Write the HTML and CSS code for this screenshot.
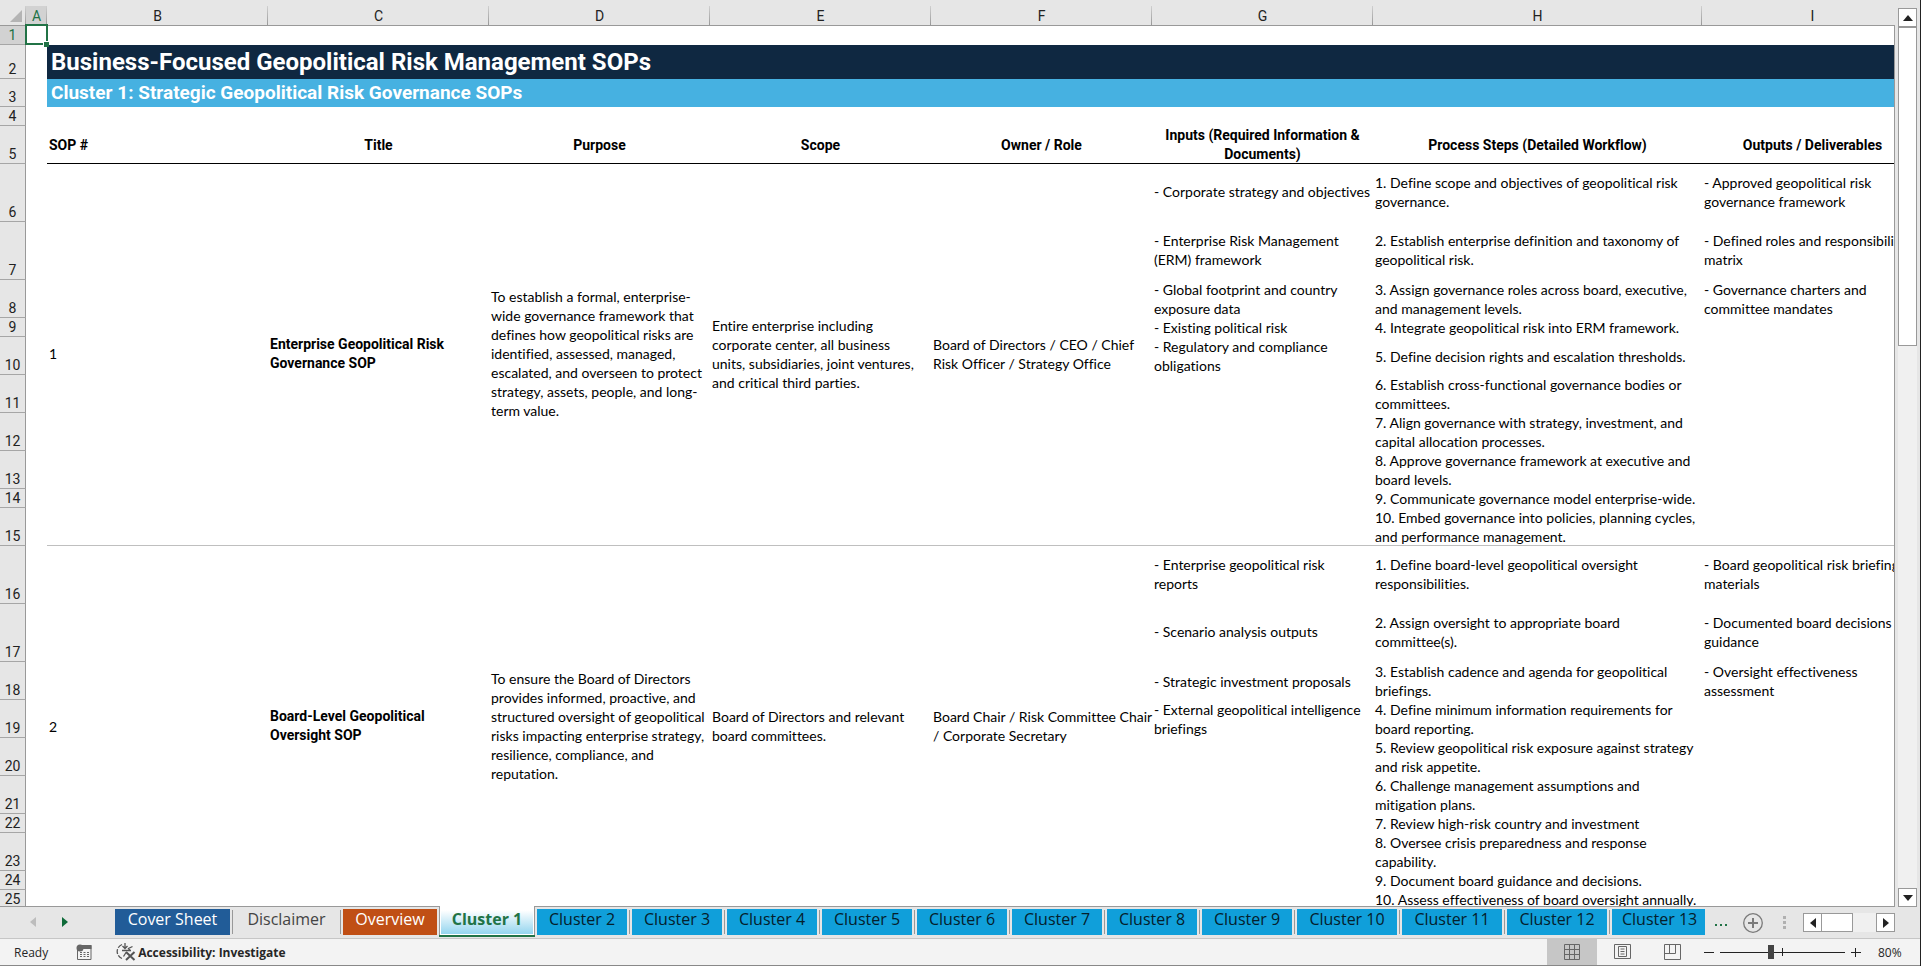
FILE: index.html
```html
<!DOCTYPE html>
<html lang="en">
<head>
<meta charset="utf-8">
<title>Business-Focused Geopolitical Risk Management SOPs</title>
<link rel="stylesheet" href="styles.css">
</head>
<body>
<main class="workspace">
  <div class="sheet">
    <table class="grid">
      <colgroup>
        <col class="w-head"><col class="w-a"><col class="w-std"><col class="w-std"><col class="w-std"><col class="w-std"><col class="w-std"><col class="w-std"><col class="w-h"><col>
      </colgroup>
      <thead>
        <tr>
          <th class="corner"><svg width="12" height="12" viewBox="0 0 12 12" aria-hidden="true"><path d="M12 0V12H0Z" fill="#b4b4b4"/></svg></th>
          <th class="on">A</th><th>B</th><th>C</th><th>D</th><th>E</th><th>F</th><th>G</th><th>H</th><th>I</th>
        </tr>
      </thead>
      <tbody>
        <tr class="r1"><th class="on">1</th><td class="selected"><span class="handle"></span></td><td colspan="8"></td></tr>
        <tr class="r-title"><th>2</th><td></td><td class="title" colspan="8">Business-Focused Geopolitical Risk Management SOPs</td></tr>
        <tr class="r-sub"><th>3</th><td></td><td class="subtitle" colspan="8">Cluster 1: Strategic Geopolitical Risk Governance SOPs</td></tr>
        <tr class="r1"><th>4</th><td></td><td colspan="8"></td></tr>
        <tr class="r2 fields"><th>5</th><td></td><td class="first">SOP #</td><td>Title</td><td>Purpose</td><td>Scope</td><td>Owner / Role</td><td>Inputs (Required Information &amp;<br>Documents)</td><td>Process Steps (Detailed Workflow)</td><td>Outputs / Deliverables</td></tr>

        <tr class="r3"><th>6</th><td rowspan="10"></td><td class="end" rowspan="10">1</td><td class="end name" rowspan="10">Enterprise Geopolitical Risk<br>Governance SOP</td><td class="end" rowspan="10">To establish a formal, enterprise-<br>wide governance framework that<br>defines how geopolitical risks are<br>identified, assessed, managed,<br>escalated, and overseen to protect<br>strategy, assets, people, and long-<br>term value.</td><td class="end" rowspan="10">Entire enterprise including<br>corporate center, all business<br>units, subsidiaries, joint ventures,<br>and critical third parties.</td><td class="end" rowspan="10">Board of Directors / CEO / Chief<br>Risk Officer / Strategy Office</td><td>- Corporate strategy and objectives</td><td>1. Define scope and objectives of geopolitical risk<br>governance.</td><td>- Approved geopolitical risk<br>governance framework</td></tr>
        <tr class="r3"><th>7</th><td>- Enterprise Risk Management<br>(ERM) framework</td><td>2. Establish enterprise definition and taxonomy of<br>geopolitical risk.</td><td>- Defined roles and responsibility<br>matrix</td></tr>
        <tr class="r2"><th>8</th><td>- Global footprint and country<br>exposure data</td><td>3. Assign governance roles across board, executive,<br>and management levels.</td><td>- Governance charters and<br>committee mandates</td></tr>
        <tr class="r1"><th>9</th><td>- Existing political risk</td><td>4. Integrate geopolitical risk into ERM framework.</td><td></td></tr>
        <tr class="r2"><th>10</th><td>- Regulatory and compliance<br>obligations</td><td>5. Define decision rights and escalation thresholds.</td><td></td></tr>
        <tr class="r2"><th>11</th><td></td><td>6. Establish cross-functional governance bodies or<br>committees.</td><td></td></tr>
        <tr class="r2"><th>12</th><td></td><td>7. Align governance with strategy, investment, and<br>capital allocation processes.</td><td></td></tr>
        <tr class="r2"><th>13</th><td></td><td>8. Approve governance framework at executive and<br>board levels.</td><td></td></tr>
        <tr class="r1"><th>14</th><td></td><td>9. Communicate governance model enterprise-wide.</td><td></td></tr>
        <tr class="r2"><th>15</th><td class="end"></td><td class="end">10. Embed governance into policies, planning cycles,<br>and performance management.</td><td class="end"></td></tr>

        <tr class="r3"><th>16</th><td rowspan="10"></td><td rowspan="10">2</td><td class="name" rowspan="10">Board-Level Geopolitical<br>Oversight SOP</td><td rowspan="10">To ensure the Board of Directors<br>provides informed, proactive, and<br>structured oversight of geopolitical<br>risks impacting enterprise strategy,<br>resilience, compliance, and<br>reputation.</td><td rowspan="10">Board of Directors and relevant<br>board committees.</td><td rowspan="10">Board Chair / Risk Committee Chair<br>/ Corporate Secretary</td><td>- Enterprise geopolitical risk<br>reports</td><td>1. Define board-level geopolitical oversight<br>responsibilities.</td><td>- Board geopolitical risk briefing<br>materials</td></tr>
        <tr class="r3"><th>17</th><td>- Scenario analysis outputs</td><td>2. Assign oversight to appropriate board<br>committee(s).</td><td>- Documented board decisions and<br>guidance</td></tr>
        <tr class="r2"><th>18</th><td>- Strategic investment proposals</td><td>3. Establish cadence and agenda for geopolitical<br>briefings.</td><td>- Oversight effectiveness<br>assessment</td></tr>
        <tr class="r2"><th>19</th><td>- External geopolitical intelligence<br>briefings</td><td>4. Define minimum information requirements for<br>board reporting.</td><td></td></tr>
        <tr class="r2"><th>20</th><td></td><td>5. Review geopolitical risk exposure against strategy<br>and risk appetite.</td><td></td></tr>
        <tr class="r2"><th>21</th><td></td><td>6. Challenge management assumptions and<br>mitigation plans.</td><td></td></tr>
        <tr class="r1"><th>22</th><td></td><td>7. Review high-risk country and investment</td><td></td></tr>
        <tr class="r2"><th>23</th><td></td><td>8. Oversee crisis preparedness and response<br>capability.</td><td></td></tr>
        <tr class="r1"><th>24</th><td></td><td>9. Document board guidance and decisions.</td><td></td></tr>
        <tr class="r1"><th>25</th><td></td><td>10. Assess effectiveness of board oversight annually.</td><td></td></tr>
      </tbody>
    </table>
  </div>
  <div class="vscroll">
    <button class="scroll-btn" aria-label="Scroll up"><svg width="10" height="6" viewBox="0 0 10 6"><path d="M5 0L10 6H0Z" fill="#222"/></svg></button>
    <div class="vtrack"><div class="vthumb"></div></div>
    <button class="scroll-btn" aria-label="Scroll down"><svg width="10" height="6" viewBox="0 0 10 6"><path d="M5 6L10 0H0Z" fill="#222"/></svg></button>
  </div>
</main>

<nav class="tabbar" aria-label="Sheets">
  <div class="tabnav">
    <button aria-label="Previous sheets"><svg width="6" height="10" viewBox="0 0 6 10"><path d="M6 0V10L0 5Z" fill="#bdbdbd"/></svg></button>
    <button aria-label="Next sheets"><svg width="6" height="10" viewBox="0 0 6 10"><path d="M0 0V10L6 5Z" fill="#0f6b3a"/></svg></button>
  </div>
  <div class="tabs" role="tablist">
    <button role="tab" class="tab cover">Cover Sheet</button>
    <button role="tab" class="tab plain">Disclaimer</button>
    <button role="tab" class="tab overview">Overview</button>
    <button role="tab" class="tab active" aria-selected="true">Cluster 1</button>
    <button role="tab" class="tab">Cluster 2</button>
    <button role="tab" class="tab">Cluster 3</button>
    <button role="tab" class="tab">Cluster 4</button>
    <button role="tab" class="tab">Cluster 5</button>
    <button role="tab" class="tab">Cluster 6</button>
    <button role="tab" class="tab">Cluster 7</button>
    <button role="tab" class="tab">Cluster 8</button>
    <button role="tab" class="tab">Cluster 9</button>
    <button role="tab" class="tab wide">Cluster 10</button>
    <button role="tab" class="tab wide">Cluster 11</button>
    <button role="tab" class="tab wide">Cluster 12</button>
    <button role="tab" class="tab last">Cluster 13</button>
  </div>
  <div class="tabtools">
    <button class="more" aria-label="More sheets"><svg width="12" height="2" viewBox="0 0 12 2"><path d="M0 0h2v2H0zM5 0h2v2H5zM10 0h2v2h-2z" fill="#217346"/></svg></button>
    <button class="add" aria-label="New sheet"><svg width="20" height="20" viewBox="0 0 20 20" fill="none" stroke="#7a7a7a"><circle cx="10" cy="10" r="9.3" stroke-width="1.3"/><path d="M10 5v10M5 10h10" stroke-width="2"/></svg></button>
    <svg class="grip" width="3" height="13" viewBox="0 0 3 13"><path d="M0 0h3v3H0zM0 5h3v3H0zM0 10h3v3H0z" fill="#b0b0b0"/></svg>
    <div class="hscroll">
      <button class="scroll-btn" aria-label="Scroll left"><svg width="6" height="10" viewBox="0 0 6 10"><path d="M6 0V10L0 5Z" fill="#222"/></svg></button>
      <div class="htrack"><div class="hthumb"></div></div>
      <button class="scroll-btn" aria-label="Scroll right"><svg width="6" height="10" viewBox="0 0 6 10"><path d="M0 0V10L6 5Z" fill="#222"/></svg></button>
    </div>
  </div>
</nav>

<footer class="status">
  <span class="ready">Ready</span>
  <button class="macro" aria-label="Record macro"><svg width="16" height="16" viewBox="0 0 16 16"><path d="M1.500 6V15.500H15V1.500H6" fill="none" stroke="#666"/><path d="M7 1h8.500v4H6z" fill="#666"/><circle cx="4" cy="4" r="3.500" fill="#666"/><path d="M4 8.500h9M4 10.500h9M4 12.500h9" stroke="#666" stroke-dasharray="2 1.500"/></svg></button>
  <button class="access"><svg width="20" height="18" viewBox="0 0 20 18" fill="none" stroke="#555" stroke-width="1.300"><path d="M6 1.500A7.500 7.500 0 0 0 6 15.500" stroke-dasharray="5 1.500"/><path d="M9 0V5M6.500 3L9 5.500L11.500 3M16.500 3.500L12.500 5.500L14.500 8M10 9.500L7.500 13.500M6 7.500h9"/><path d="M10 9L18.500 17M18.500 9L10 17" stroke-width="2"/></svg>Accessibility: Investigate</button>
  <div class="views">
    <button class="view current" aria-label="Normal"><svg width="16" height="16" viewBox="0 0 16 16" fill="none" stroke="#666"><path d="M.5 .5h15v15H.5zM5.500 .5v15M10.500 .5v15M.5 5.500h15M.5 10.500h15"/></svg></button>
    <button class="view" aria-label="Page Layout"><svg width="17" height="16" viewBox="0 0 17 16" fill="none" stroke="#666"><path d="M.5 .5h16v14H.5zM4.500 2.500h8v10h-8zM6.500 5h4M6.500 7.500h4M6.500 10h4"/></svg></button>
    <button class="view" aria-label="Page Break Preview"><svg width="17" height="16" viewBox="0 0 17 16" fill="none" stroke="#666"><path d="M.5 .5h16v15H.5zM.5 9.500h11V.5M5.500 .5v9"/></svg></button>
  </div>
  <div class="zoom">
    <button aria-label="Zoom out"><svg width="10" height="10" viewBox="0 0 10 10"><path d="M0 5.500h10" stroke="#222"/></svg></button>
    <div class="slider"><span class="tick"></span><input type="range" min="0" max="100" value="40" aria-label="Zoom level"></div>
    <button aria-label="Zoom in"><svg width="10" height="10" viewBox="0 0 10 10"><path d="M0 5.500h10M4.500 1v9" stroke="#222"/></svg></button>
    <span class="percent">80%</span>
  </div>
</footer>
</body>
</html>
```
FILE: styles.css
```css
* { box-sizing: border-box; }

:root {
  --line: #999999;
  --chrome: #e6e6e6;
  --green: #217346;
  --cell-font: Lato, Roboto, sans-serif;
  --head-font: Roboto, "Liberation Sans", sans-serif;
  --ui-font: "Open Sans", "Noto Sans", sans-serif;
}

body {
  margin: 0;
  height: 100vh;
  display: flex;
  flex-direction: column;
  overflow: hidden;
  background: var(--chrome);
  border-right: 1px solid #222;
  font-family: var(--ui-font);
  font-size: 12px;
  color: #262626;
}

button {
  border: 0;
  padding: 0;
  background: none;
  font: inherit;
  color: inherit;
}

svg { display: block; }

/* Sheet */
.workspace { flex: 1; min-height: 0; display: flex; }

.sheet {
  position: relative;
  flex: 1;
  min-width: 0;
  overflow: hidden;
  padding-top: 6px;
  border-bottom: 1px solid var(--line);
}

.sheet::after {
  content: "";
  position: absolute;
  top: 25px;
  right: 0;
  bottom: 0;
  border-right: 1px solid var(--line);
}

.grid {
  table-layout: fixed;
  width: 100%;
  min-width: 1923px;
  border-collapse: separate;
  border-spacing: 0;
  font-family: var(--cell-font);
  font-size: 14px;
  font-variant-ligatures: none;
  line-height: 19px;
  color: #000;
}

.w-head { width: 26px; }
.w-a { width: 21px; }
.w-std { width: 221px; }
.w-h { width: 329px; }

.grid th {
  padding: 0;
  font-family: var(--head-font);
  font-weight: 400;
  color: #222;
  background: var(--chrome);
}

.grid thead th {
  height: 20px;
  padding-top: 1px;
  border-bottom: 1px solid var(--line);
  background: linear-gradient(#cfcfcf, #999999) right / 1px 100% no-repeat var(--chrome);
  line-height: 18px;
}

tbody th {
  vertical-align: bottom;
  border-right: 1px solid var(--line);
  border-bottom: 1px solid #a6a6a6;
  line-height: 18px;
}

thead th.corner svg { margin: 0 0 0 10px; }

.grid th.on { background-color: #d2d2d2; color: var(--green); }

tbody td { background: #fff; padding: 0 2px; vertical-align: middle; white-space: nowrap; }

.r1 { height: 19px; }
.r2 { height: 38px; }
.r3 { height: 58px; }
.r3 td { padding-bottom: 3px; }
.r-title { height: 34px; }
.r-sub { height: 28px; }

.title, .subtitle, .fields, .name { font-family: var(--head-font); font-weight: 700; }

tbody td.title {
  background: #0f2841;
  color: #fff;
  font-size: 24px;
  line-height: 32px;
  padding-left: 4px;
}

tbody td.subtitle {
  background: #46b1e1;
  color: #fff;
  font-size: 19px;
  line-height: 26px;
  padding-left: 4px;
}

.fields td { text-align: center; box-shadow: inset 0 -1px #000; }
.fields td:nth-child(2) { box-shadow: none; }
.fields td.first { text-align: left; }
td.end { box-shadow: inset 0 -1px #bfbfbf; }

.selected { position: relative; }
.selected::before {
  content: "";
  position: absolute;
  z-index: 1;
  inset: -2px -1px 0 -1px;
  border: 2px solid var(--green);
}
.handle {
  position: absolute;
  z-index: 2;
  right: -2px;
  bottom: -2px;
  width: 6px;
  height: 6px;
  background: var(--green);
  border: solid #fff;
  border-width: 1px 0 0 1px;
}

/* Scroll bars */
.scroll-btn {
  width: 19px;
  height: 19px;
  flex: none;
  display: grid;
  place-items: center;
  background: #fff;
  border: 1px solid var(--line);
}

.vscroll { width: 25px; padding: 8px 3px 0; display: flex; flex-direction: column; }
.vtrack { flex: 1; background: #f0f0f0; }
.vthumb { height: 37%; background: #fff; border: 1px solid var(--line); }
.hscroll { width: 92px; display: flex; }
.htrack { flex: 1; background: #f0f0f0; }
.hthumb { width: 31px; height: 19px; background: #fff; border: 1px solid var(--line); border-left: 0; }

/* Sheet tabs */
.tabbar { height: 32px; display: flex; border-bottom: 1px solid #c6c6c6; }
.tabnav { width: 112px; flex: none; display: flex; gap: 26px; padding: 10px 0 0 30px; align-items: flex-start; }
.tabs { display: flex; flex: 1; min-width: 0; padding-top: 2px; }

.tab {
  position: relative;
  flex: none;
  width: 90px;
  height: 26px;
  margin-right: 5px;
  background: #109fda;
  color: #05202c;
  font-size: 16px;
  line-height: 20px;
  padding-bottom: 6px;
  white-space: nowrap;
}
.tab::after {
  content: "";
  position: absolute;
  top: 1px;
  bottom: 1px;
  right: -3px;
  border-right: 1px solid var(--line);
}
.tab.wide { width: 100px; }
.tab.last { width: 93px; padding-left: 10px; text-align: left; overflow: hidden; margin: 0; }
.tab.cover { width: 115px; margin-left: 3px; background: #215c98; color: #fff; }
.tab.plain { width: 103px; background: none; color: #444; }
.tab.overview { width: 94px; margin-right: 2px; background: #c04f15; color: #fff; }
.tab.overview::after, .tab.active::after { display: none; }
.tab.active {
  width: 96px;
  height: 29px;
  margin: -3px 2px 0 0;
  padding: 3px 0 6px;
  background: linear-gradient(#fff 15%, #8fd3ee) padding-box;
  color: var(--green);
  font-weight: 700;
  border: solid var(--line);
  border-width: 0 1px;
  box-shadow: inset 1px 0 #fff, inset -1px -1px #fff, 0 2px var(--green);
}

.tabtools { flex: none; width: 215px; display: flex; align-items: center; }
.more { margin: 4px 16px 0 10px; }
.add { margin-right: 20px; }
.grip { margin-right: 17px; }

/* Status bar */
.status {
  height: 27px;
  display: flex;
  align-items: center;
  background: #f3f3f3;
  border-bottom: 1px solid #888;
  padding-left: 14px;
}
.macro { margin: 0 24px 0 28px; }
.access { display: flex; align-items: center; gap: 2px; font-weight: 700; }
.views { margin-left: auto; display: flex; height: 100%; }
.view { width: 50px; display: grid; place-items: center; }
.view.current { background: #c6c6c6; }
.zoom { display: flex; align-items: center; width: 223px; padding-left: 7px; }
.slider { position: relative; width: 125px; height: 16px; margin: 0 6px; }
.slider input { appearance: none; display: block; margin: 0; width: 100%; height: 16px; background: linear-gradient(#222, #222) center / 100% 1px no-repeat; }
.slider input::-webkit-slider-thumb { appearance: none; width: 6px; height: 14px; background: #444; }
.tick { position: absolute; left: 62px; top: 4px; width: 1px; height: 8px; background: #222; }
.percent { margin-left: 17px; }
```
